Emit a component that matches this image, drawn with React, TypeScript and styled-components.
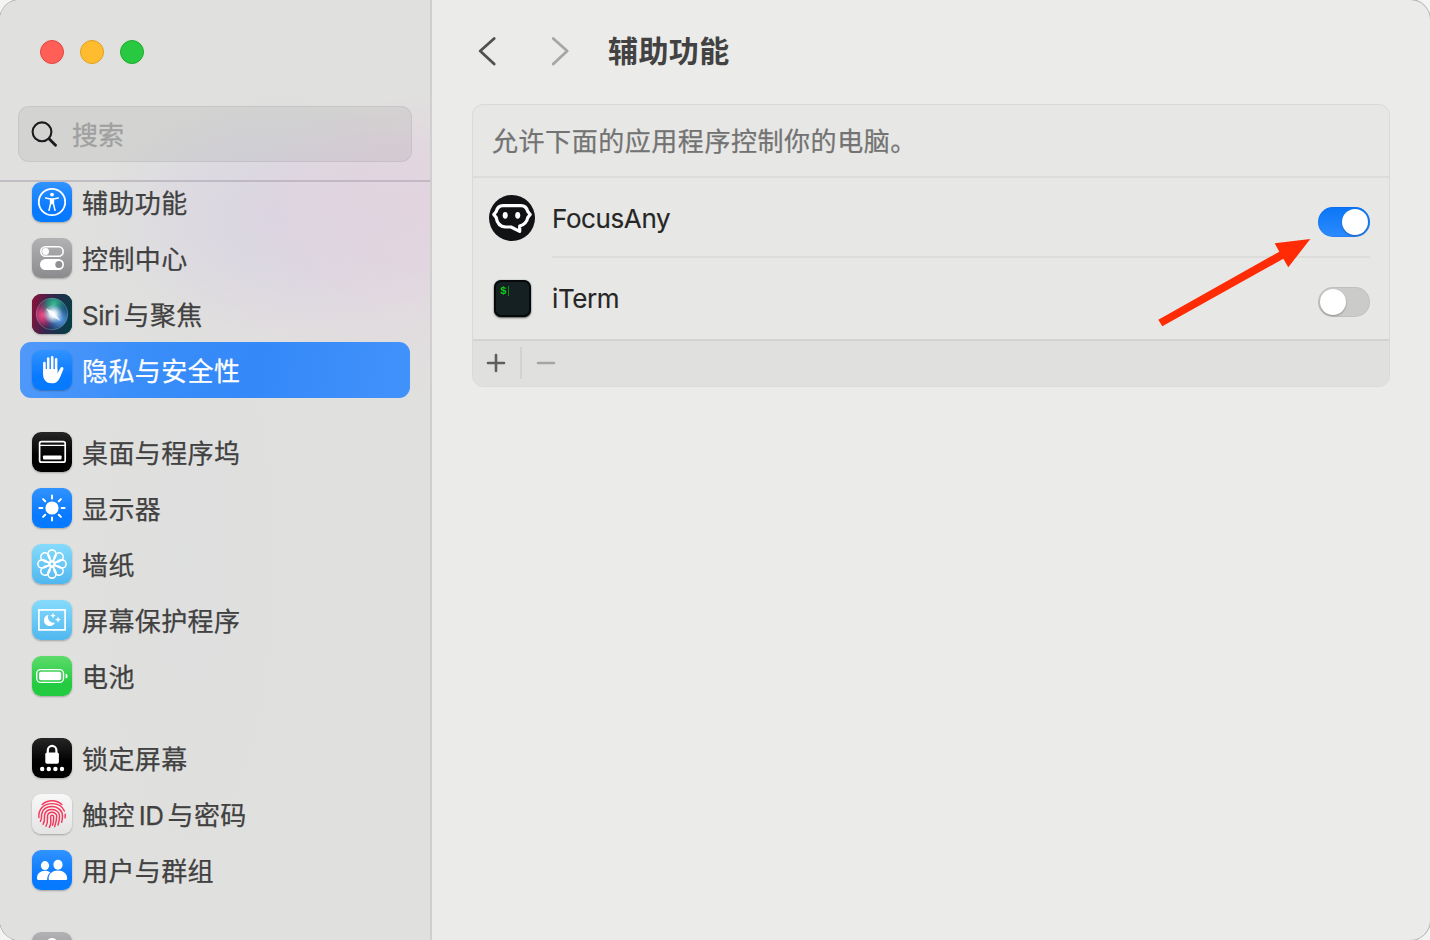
import React from "react";
import styled, { createGlobalStyle } from "styled-components";

const Global = createGlobalStyle`
  * { box-sizing: border-box; }
  body { margin: 0; background: #f4f4f3; font-family: Inter, "Noto Sans CJK SC", sans-serif; }
`;

const Window = styled.div`
  position: relative;
  display: flex;
  width: 1430px;
  height: 940px;
  overflow: hidden;
  border-radius: 20px;
  background: #ebebe9;
  box-shadow: 0 0 0 1px #b4b4b4;
`;

const Sidebar = styled.aside`
  display: flex;
  flex-direction: column;
  flex: none;
  width: 432px;
  height: 940px;
  border-right: 2px solid #cfcfce;
  background:
    radial-gradient(ellipse 190px 110px at 430px 205px, rgba(226, 211, 223, 0.85), rgba(226, 211, 223, 0.7) 50%, rgba(226, 211, 223, 0) 100%),
    radial-gradient(ellipse 190px 120px at 280px 215px, rgba(216, 211, 226, 0.85), rgba(216, 211, 226, 0.5) 50%, rgba(216, 211, 226, 0) 100%),
    radial-gradient(ellipse 220px 110px at 370px 290px, rgba(226, 216, 224, 0.75), rgba(226, 216, 224, 0) 100%),
    radial-gradient(ellipse 100px 330px at 190px 560px, rgba(219, 222, 222, 0.5), rgba(219, 222, 222, 0) 100%),
    #e0e0de;
`;

const SidebarTop = styled.div`
  display: flex;
  flex-direction: column;
  flex: none;
  height: 182px;
  padding: 40px 18px 0;
  border-bottom: 2px solid rgba(150, 140, 155, 0.4);
`;

const Lights = styled.div`
  display: flex;
  gap: 16px;
  padding-left: 22px;
  margin-bottom: 42px;
`;

const Light = styled.span<{ $fill: string; $edge: string }>`
  width: 24px;
  height: 24px;
  border-radius: 50%;
  background: ${(p) => p.$fill};
  border: 1px solid ${(p) => p.$edge};
`;

const Search = styled.label`
  display: flex;
  align-items: center;
  gap: 13px;
  width: 394px;
  height: 56px;
  padding-left: 12px;
  border: 1px solid rgba(0, 0, 0, 0.06);
  border-radius: 11px;
  background: rgba(0, 0, 0, 0.055);
  color: #a0a0a0;
  font-size: 26px;
  line-height: 56px;
  -webkit-text-stroke: 0.3px currentColor;
`;

const SearchText = styled.span`
  padding-top: 3px;
`;

const List = styled.nav`
  display: flex;
  flex-direction: column;
  gap: 26px;
  flex: 1;
  min-height: 0;
  overflow: hidden;
`;

const Group = styled.div`
  display: flex;
  flex-direction: column;
  flex: none;
  padding: 0 20px;
  &:first-child { margin-top: -8px; }
`;

const Item = styled.div<{ $selected?: boolean }>`
  display: flex;
  align-items: center;
  gap: 10px;
  width: 390px;
  height: 56px;
  padding-left: 12px;
  border-radius: 11px;
  background: ${(p) => (p.$selected ? "linear-gradient(100deg, #5099fa, #3a8ef9 30%, #3488f8 60%, #4292fb)" : "none")};
  color: ${(p) => (p.$selected ? "#fff" : "#414141")};
  font-size: 26px;
  letter-spacing: 0.4px;
  white-space: nowrap;
  -webkit-text-stroke: 0.25px currentColor;
`;

const Label = styled.span`
  padding-top: 4px;
  line-height: 52px;
`;

const Latin = styled.span<{ $lead?: boolean }>`
  letter-spacing: -0.5px;
  margin-left: ${(p) => (p.$lead ? "4px" : "0")};
  margin-right: 4px;
`;

const Tile = styled.span<{ $bg: string }>`
  display: flex;
  flex: none;
  width: 40px;
  height: 40px;
  border-radius: 9px;
  overflow: hidden;
  background: ${(p) => p.$bg};
  box-shadow: 0 1px 2px rgba(0, 0, 0, 0.28);
  color: #fff;
`;

const Main = styled.main`
  flex: 1;
  display: flex;
  flex-direction: column;
  padding: 0 40px;
`;

const Toolbar = styled.header`
  display: flex;
  align-items: center;
  height: 104px;
`;

const Title = styled.h1`
  margin: 0 0 2px 36px;
  font-size: 30px;
  font-weight: 700;
  letter-spacing: 0.4px;
  line-height: 100px;
  color: #424242;
`;

const Panel = styled.section`
  display: flex;
  flex-direction: column;
  width: 918px;
  height: 283px;
  border: 1px solid #dadad8;
  border-radius: 11px;
  overflow: hidden;
  background: #e7e7e5;
`;

const Hint = styled.div`
  height: 73px;
  padding-left: 19px;
  border-bottom: 2px solid #dcdcda;
  color: #737373;
  font-size: 26px;
  letter-spacing: 0.55px;
  line-height: 73px;
  -webkit-text-stroke: 0.25px currentColor;
`;

const AppRow = styled.div`
  display: flex;
  align-items: center;
  flex: none;
  height: 80px;
  padding: 0 19px 0 16px;
`;

const AppName = styled.div<{ $divided?: boolean }>`
  display: flex;
  align-items: center;
  justify-content: space-between;
  flex: 1;
  height: 80px;
  margin-left: 17px;
  padding-top: 2px;
  border-bottom: ${(p) => (p.$divided ? "2px solid #dcdcda" : "2px solid transparent")};
  color: #262626;
  font-size: 26px;
  letter-spacing: -0.4px;
  -webkit-text-stroke: 0.15px currentColor;
`;

const Switch = styled.span<{ $on?: boolean }>`
  display: flex;
  justify-content: ${(p) => (p.$on ? "flex-end" : "flex-start")};
  width: 52px;
  height: 30px;
  margin-top: 8px;
  padding: 2px;
  border-radius: 15px;
  background: ${(p) => (p.$on ? "linear-gradient(#0a76f6, #2d8bff)" : "#cbcbca")};
  box-shadow: inset 0 0 0 1px ${(p) => (p.$on ? "rgba(0, 90, 220, 0.2)" : "rgba(0, 0, 0, 0.05)")};
`;

const Knob = styled.span`
  width: 26px;
  height: 26px;
  border-radius: 50%;
  background: #fff;
  box-shadow: 0 1px 2px rgba(0, 0, 0, 0.3);
`;

const Footer = styled.footer`
  display: flex;
  align-items: center;
  flex: 1;
  margin-top: 1px;
  padding-bottom: 1px;
  border-top: 2px solid #d3d3d1;
  background: #e0e0de;
`;

const FooterButton = styled.span`
  display: flex;
  width: 47px;
  padding-left: 13px;
`;

const FooterLine = styled.span`
  width: 2px;
  height: 32px;
  margin-right: 1px;
  background: #d2d2d0;
`;

const Arrow = styled.svg`
  position: absolute;
  left: 1150px;
  top: 230px;
`;

const BLUE = "linear-gradient(#3093ff, #0a7aff 65%, #047aff)";
const SKY = "linear-gradient(#86dbfb, #4fb7ef)";
const BLACK = "linear-gradient(#262626, #000 60%)";
const GRAY = "linear-gradient(#b2b2b4, #8b8b8e)";

const TURNS = [0, 45, 90, 135, 180, 225, 270, 315];

const Svg = ({ children }: { children: React.ReactNode }) => (
  <svg width="40" height="40" viewBox="0 0 40 40" fill="none">{children}</svg>
);

const AccessGlyph = () => (
  <Svg>
    <circle cx="20" cy="20" r="13.2" stroke="#fff" strokeWidth="1.8" />
    <circle cx="20" cy="12.6" r="1.9" fill="#fff" />
    <path d="M13.6 16 18.6 17v4.5L17 28.3M26.4 16 21.4 17v4.5L23 28.3" stroke="#fff" strokeWidth="1.5" strokeLinecap="round" strokeLinejoin="round" />
    <path d="M18 16.3h4v5.2L20 22.5l-2-1z" fill="#fff" />
  </Svg>
);

const ControlGlyph = () => (
  <Svg>
    <rect x="8.8" y="8.7" width="22.4" height="9.6" rx="4.8" stroke="#fff" strokeWidth="1.6" />
    <circle cx="13.6" cy="13.5" r="3.4" fill="#fff" />
    <rect x="8" y="21" width="24" height="11" rx="5.5" fill="#fff" />
    <circle cx="26.8" cy="26.5" r="3.5" fill="#8f8f92" />
  </Svg>
);

const SiriGlyph = () => (
  <Svg>
    <defs>
      <linearGradient id="siriBase" x1="0" y1="0.3" x2="1" y2="0.5">
        <stop offset="0" stopColor="#86123c" />
        <stop offset="0.5" stopColor="#2b2a4f" />
        <stop offset="1" stopColor="#063e46" />
      </linearGradient>
      <radialGradient id="siriPink" cx="11" cy="21" r="15" gradientUnits="userSpaceOnUse">
        <stop offset="0" stopColor="#f0508a" />
        <stop offset="0.4" stopColor="#d13a78" stopOpacity="0.8" />
        <stop offset="1" stopColor="#a11c5a" stopOpacity="0" />
      </radialGradient>
      <radialGradient id="siriGreen" cx="22" cy="10" r="15" gradientUnits="userSpaceOnUse">
        <stop offset="0" stopColor="#3bbf8d" />
        <stop offset="0.4" stopColor="#2aa088" stopOpacity="0.8" />
        <stop offset="1" stopColor="#187f80" stopOpacity="0" />
      </radialGradient>
      <radialGradient id="siriBlue" cx="28" cy="25" r="16" gradientUnits="userSpaceOnUse">
        <stop offset="0" stopColor="#66a5ee" />
        <stop offset="0.4" stopColor="#4580c8" stopOpacity="0.8" />
        <stop offset="1" stopColor="#1e5aa6" stopOpacity="0" />
      </radialGradient>
      <radialGradient id="siriCore" cx="21" cy="20" r="10" gradientUnits="userSpaceOnUse">
        <stop offset="0" stopColor="#fff" />
        <stop offset="0.35" stopColor="#f0fbff" stopOpacity="0.85" />
        <stop offset="1" stopColor="#bfe8f5" stopOpacity="0" />
      </radialGradient>
    </defs>
    <rect width="40" height="40" fill="url(#siriBase)" />
    <circle cx="20" cy="20" r="16" fill="url(#siriPink)" />
    <circle cx="20" cy="20" r="16" fill="url(#siriGreen)" />
    <circle cx="20" cy="20" r="16" fill="url(#siriBlue)" />
    <circle cx="20" cy="20" r="15.8" stroke="#6fb6b8" strokeOpacity="0.4" strokeWidth="1" />
    <circle cx="21" cy="20" r="10" fill="url(#siriCore)" />
    <path d="M14 14.5l8 3.5 2 3 4.5 6-7.5-4-3.5-3z" fill="#fff" fillOpacity="0.8" />
  </Svg>
);

const HandGlyph = () => (
  <Svg>
    <path d="M12.4 13V23M16.2 8.6V21M20.2 7.4V21M24.1 9.4V22" stroke="#fff" strokeWidth="2.6" strokeLinecap="round" />
    <path d="M11.1 19h14.3v4.6l2.8-5.2c.6-1.1 1.5-1.5 2.3-1.2.9.3 1.1 1.2.8 2.2l-3 7.3c-1.7 4.3-4.2 6.6-8.5 6.6-5.4 0-8.700-3.400-8.700-9z" fill="#fff" />
  </Svg>
);

const DockGlyph = () => (
  <Svg>
    <rect x="7.6" y="9.6" width="25.6" height="20.6" rx="2" stroke="#fff" strokeWidth="1.7" />
    <path d="M8 13.4h25" stroke="#fff" strokeWidth="1.3" />
    <rect x="11" y="23.4" width="18.6" height="4" rx="0.8" fill="#fff" />
  </Svg>
);

const SunGlyph = () => (
  <Svg>
    <circle cx="20" cy="20" r="6.6" fill="#fff" />
    <g stroke="#fff" strokeWidth="2" strokeLinecap="round">
      {TURNS.map((a) => (
        <path key={a} d="M20 7.4v3" transform={`rotate(${a} 20 20)`} />
      ))}
    </g>
  </Svg>
);

const FlowerGlyph = () => (
  <Svg>
    <g stroke="#fff" strokeWidth="1.6">
      {TURNS.map((a) => (
        <path key={a} d="M20 17.600C18.400 16.200 15.900 13 15.900 10.200a4.100 4.300 0 0 1 8.200 0C24.100 13 21.600 16.200 20 17.600z" transform={`rotate(${a} 20 20)`} />
      ))}
      <circle cx="20" cy="20" r="2.100" strokeWidth="1.400" />
    </g>
  </Svg>
);

const SaverGlyph = () => (
  <Svg>
    <rect x="6.9" y="9.9" width="26.2" height="20" stroke="#fff" strokeWidth="1.7" />
    <path d="M16.6 14.8a5.7 5.7 0 1 0 6.4 7.6 5.4 5.4 0 0 1-6.4-7.6z" fill="#fff" />
    <path d="M21 12.8l.8 2 2 .8-2 .8-.8 2-.8-2-2-.8 2-.8zM26 16.6l.9 2.2 2.2.9-2.2.9-.9 2.2-.9-2.2-2.2-.9 2.2-.9z" fill="#fff" />
  </Svg>
);

const BatteryGlyph = () => (
  <Svg>
    <rect x="4.700" y="13.600" width="26.800" height="12.800" rx="4" stroke="#fff" strokeWidth="1.400" />
    <rect x="7" y="15.800" width="22.200" height="8.400" rx="2" fill="#fff" />
    <path d="M33.600 17.400c2.600.8 2.600 4.400 0 5.200z" fill="#fff" />
  </Svg>
);

const LockGlyph = () => (
  <Svg>
    <path d="M15.800 16v-3.800a4.300 4.300 0 0 1 8.600 0V16" stroke="#fff" strokeWidth="2.200" />
    <rect x="13.300" y="14.400" width="13.600" height="11.400" rx="1.800" fill="#fff" />
    {[10.2, 16.8, 23.4, 30].map((x) => (
      <circle key={x} cx={x} cy="31" r="2.2" fill="#fff" />
    ))}
  </Svg>
);

const TouchGlyph = () => (
  <Svg>
    <g stroke="#f2375b" strokeWidth="1.45" strokeLinecap="round">
      <path d="M10.2 10.6C12.8 8 16.2 6.7 20 6.7s7.2 1.3 9.8 3.9" />
      <path d="M6.9 23.5C6.2 15.5 11.5 9.6 20 9.6c6 0 10.600 2.900 12.400 7.400M33.200 20.200c.1 1.400 0 2.600-.2 3.600" />
      <path d="M8.400 27.300C10.200 24.500 9.200 22 9.700 20 10.600 15.500 14.500 12.500 20 12.500S30.500 16.400 30.500 22c0 2.500-.3 4.500-.9 6.300" />
      <path d="M11 30.200C13.400 27 12.100 23.400 12.600 20.800 13.300 17.400 16.300 15.400 20 15.400s7.600 2.600 7.600 6.600c0 3.300-.6 6-1.600 9" />
      <path d="M14 32.200C16.500 28.300 15.100 23.800 15.600 21.400c.5-2 2.200-3.100 4.400-3.100s4.700 1.500 4.700 3.800c0 4-.8 7.300-2.100 10.600" />
      <path d="M17.400 33.300C19.900 29.500 18.500 25.500 18.600 22.600c.1-1.800 3.100-1.800 3.100.3 0 3.300-.3 6-1.200 8.300" />
    </g>
  </Svg>
);

const UsersGlyph = () => (
  <Svg>
    <g fill="#fff">
      <ellipse cx="13" cy="15.600" rx="4.100" ry="4.500" />
      <path d="M5 28.300c0-4.700 3.400-7.500 8-7.500 2.200 0 4 .6 5.300 1.700-2 1.600-3.100 3.800-3.200 7.500H6.200c-.8 0-1.200-.9-1.200-1.700z" />
      <ellipse cx="26" cy="14.800" rx="4.600" ry="5" />
      <path d="M16.600 28.500c0-5 4.100-8 9.300-8s9.300 3 9.300 8c0 1-.5 1.500-1.400 1.500H18c-.9 0-1.400-.5-1.400-1.500z" />
    </g>
  </Svg>
);

const PartialGlyph = () => (
  <Svg>
    <circle cx="20" cy="12" r="6" fill="#fff" />
  </Svg>
);

type Entry = { label: React.ReactNode; bg: string; glyph: React.ReactNode; selected?: boolean };

const GROUPS: Entry[][] = [
  [
    { label: "辅助功能", bg: BLUE, glyph: <AccessGlyph /> },
    { label: "控制中心", bg: GRAY, glyph: <ControlGlyph /> },
    { label: <><Latin>Siri</Latin>与聚焦</>, bg: "#222", glyph: <SiriGlyph /> },
    { label: "隐私与安全性", bg: BLUE, glyph: <HandGlyph />, selected: true },
  ],
  [
    { label: "桌面与程序坞", bg: BLACK, glyph: <DockGlyph /> },
    { label: "显示器", bg: BLUE, glyph: <SunGlyph /> },
    { label: "墙纸", bg: SKY, glyph: <FlowerGlyph /> },
    { label: "屏幕保护程序", bg: SKY, glyph: <SaverGlyph /> },
    { label: "电池", bg: "linear-gradient(#5ddb6b, #22cb3f 70%)", glyph: <BatteryGlyph /> },
  ],
  [
    { label: "锁定屏幕", bg: BLACK, glyph: <LockGlyph /> },
    { label: <>触控<Latin $lead>ID</Latin>与密码</>, bg: "linear-gradient(#f8f8f8, #e4e4e4)", glyph: <TouchGlyph /> },
    { label: "用户与群组", bg: BLUE, glyph: <UsersGlyph /> },
  ],
  [{ label: "", bg: GRAY, glyph: <PartialGlyph /> }],
];

const FocusAnyIcon = () => (
  <svg width="46" height="46" viewBox="0 0 46 46" fill="none">
    <circle cx="23" cy="23" r="23" fill="#111214" />
    <path
      d="M14 10.600h18c3.700 0 5.900 2.200 6.800 6l2.400 2.900-2.400 3c-.8 4.300-3.500 7.200-8.100 8.500v5.400L22 32h-5.500C11.300 31.600 8 28 7.200 22.500l-2.400-3 2.400-2.900c.9-3.800 3.100-6 6.800-6z"
      stroke="#fff"
      strokeWidth="3.200"
      strokeLinejoin="round"
    />
    <ellipse cx="16.200" cy="20.300" rx="2.500" ry="3.400" fill="#fff" />
    <ellipse cx="28.700" cy="20.300" rx="2.500" ry="3.400" fill="#fff" />
  </svg>
);

const Prompt = styled.span`
  display: flex;
  align-items: flex-start;
  width: 37px;
  height: 37px;
  margin: 0 4px 0 5px;
  padding: 3px 0 0 4px;
  border: 2px solid #060809;
  border-radius: 7px;
  background: #152023;
  box-shadow: 0 1px 2px rgba(0, 0, 0, 0.6), 0 0 1px #5b93a8;
  color: #12c716;
  font: 700 11px/13px "Liberation Mono", monospace;
`;

const Caret = styled.span`
  width: 1.5px;
  height: 10px;
  margin: 1px 0 0 1px;
  background: #0a8a10;
`;

export default function App() {
  return (
    <>
      <Global />
      <Window>
        <Sidebar>
          <SidebarTop>
            <Lights>
              <Light $fill="#ff5f57" $edge="#e2463f" />
              <Light $fill="#febc2e" $edge="#dfa023" />
              <Light $fill="#28c840" $edge="#1dad2b" />
            </Lights>
            <Search>
              <svg width="28" height="28" viewBox="0 0 28 28" fill="none" stroke="#1c1c1e" strokeLinecap="round">
                <circle cx="11" cy="11.8" r="9.4" strokeWidth="2.1" />
                <path d="M18 18.8 24.5 25.2" strokeWidth="2.8" />
              </svg>
              <SearchText>搜索</SearchText>
            </Search>
          </SidebarTop>
          <List>
            {GROUPS.map((group, g) => (
              <Group key={g}>
                {group.map((entry, i) => (
                  <Item key={i} $selected={entry.selected}>
                    <Tile $bg={entry.bg}>{entry.glyph}</Tile>
                    <Label>{entry.label}</Label>
                  </Item>
                ))}
              </Group>
            ))}
          </List>
        </Sidebar>
        <Main>
          <Toolbar>
            <svg width="100" height="32" viewBox="0 0 100 32" fill="none" strokeWidth="2.8" strokeLinecap="round" strokeLinejoin="round">
              <path d="M22.2 2.500 8.200 15 22.200 28" stroke="#505050" />
              <path d="M81.200 2.500 95.200 15 81.200 28" stroke="#a6a6a5" />
            </svg>
            <Title>辅助功能</Title>
          </Toolbar>
          <Panel>
            <Hint>允许下面的应用程序控制你的电脑。</Hint>
            <AppRow>
              <FocusAnyIcon />
              <AppName $divided>
                FocusAny
                <Switch $on><Knob /></Switch>
              </AppName>
            </AppRow>
            <AppRow>
              <Prompt>$<Caret /></Prompt>
              <AppName>
                iTerm
                <Switch><Knob /></Switch>
              </AppName>
            </AppRow>
            <Footer>
              <FooterButton>
                <svg width="20" height="20" viewBox="0 0 20 20" stroke="#5d5d5d" strokeWidth="2.6" strokeLinecap="round"><path d="M2 10h16M10 2v16" /></svg>
              </FooterButton>
              <FooterLine />
              <FooterButton>
                <svg width="20" height="20" viewBox="0 0 20 20" stroke="#a5a5a4" strokeWidth="2.6" strokeLinecap="round"><path d="M2 10h16" /></svg>
              </FooterButton>
            </Footer>
          </Panel>
        </Main>
        <Arrow width="170" height="100" viewBox="1150 230 170 100">
          <path d="M1158.3 319.7 1162.3 326.3 1283.3 258.7 1288.3 267.3 1310.3 239 1274.7 243.3 1279.3 251.7z" fill="#ff2b05" />
        </Arrow>
      </Window>
    </>
  );
}
